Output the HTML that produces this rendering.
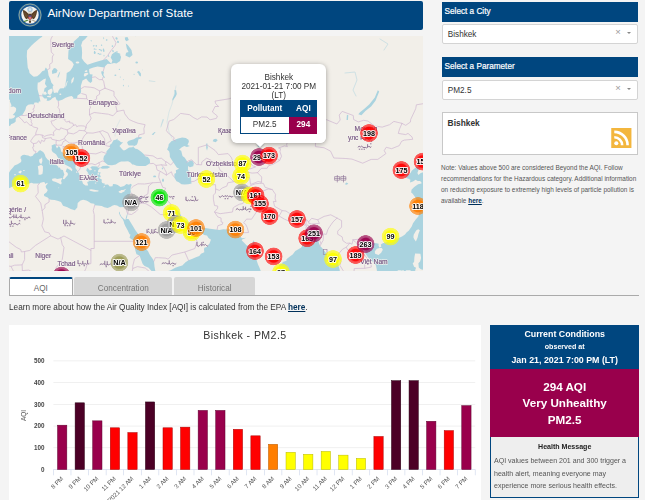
<!DOCTYPE html>
<html><head><meta charset="utf-8">
<style>
html,body{margin:0;padding:0}
body{width:645px;height:500px;overflow:hidden;background:#f4f4f4;font-family:"Liberation Sans",sans-serif;color:#333;position:relative}
.abs{position:absolute}
#hdr{left:9px;top:1px;width:414px;height:29px;background:#00467f;border-radius:2px}
#hdr .t{position:absolute;left:38.4px;top:-3.2px;line-height:29px;font-size:11.7px;color:#fff;white-space:nowrap}
#map{left:9px;top:36px;width:414px;height:235px;background:#f2efe9;overflow:hidden}
.sh{background:#00467f;color:#fff;font-size:8.2px;-webkit-text-stroke:0.2px #fff;line-height:20px;padding-left:3px;white-space:nowrap}
.dd{background:#fff;border:0.6px solid #d4d4d4;border-radius:2px;font-size:8.2px;line-height:20px;color:#333;box-sizing:border-box}
.tab{top:277px;height:18px;box-sizing:border-box;font-size:8.2px;text-align:center;line-height:18px;padding-top:3px;color:#777;background:#d6d6d6;border-radius:2px 2px 0 0}
</style></head><body>

<div id="hdr" class="abs">
<svg class="abs" style="left:8.5px;top:1.6px" width="24" height="24" viewBox="0 0 24 24">
<circle cx="12" cy="12" r="11.8" fill="#23609a"/><circle cx="12" cy="12" r="11" fill="none" stroke="#c9cf9a" stroke-width="0.7" opacity="0.9"/>
<circle cx="12" cy="12" r="9.6" fill="#1b5289"/>
<circle cx="12" cy="12" r="8.7" fill="#f4f3ee"/>
<circle cx="12" cy="6.6" r="2.7" fill="#a8c6dd"/><circle cx="12" cy="6.6" r="1.3" fill="#dbe8f1"/>
<path d="M11.2 12.5 C9.6 9.2 7.4 7.4 4.9 7 C5 10 5.8 13.8 8.2 16.3 C9.8 15.8 10.8 14.4 11.2 12.5Z" fill="#5b4026"/>
<path d="M12.8 12.5 C14.4 9.2 16.6 7.4 19.1 7 C19 10 18.2 13.8 15.8 16.3 C14.2 15.8 13.2 14.4 12.8 12.5Z" fill="#5b4026"/>
<path d="M6.2 9.5 L9.5 13 M6.8 12 L9.2 14.3" stroke="#8a6a45" stroke-width="0.5" fill="none"/><path d="M17.8 9.5 L14.5 13 M17.2 12 L14.8 14.3" stroke="#8a6a45" stroke-width="0.5" fill="none"/>
<ellipse cx="12" cy="13.5" rx="1.9" ry="3.4" fill="#4a3420"/>
<circle cx="12" cy="9.7" r="1.25" fill="#e9e4da" stroke="#9a8a70" stroke-width="0.3"/>
<path d="M10.4 12.4h3.2v2.6q0 1.5 -1.6 2.1q-1.6 -0.6 -1.6 -2.1z" fill="#c93a3c"/><rect x="10.4" y="12.4" width="3.2" height="1.3" fill="#33508f"/>
<path d="M11.45 13.7v3.1M12.55 13.7v3.1" stroke="#f1e9e4" stroke-width="0.35"/>
<path d="M10.7 17.6 L13.3 17.6 L12.6 20 L11.4 20Z" fill="#5b4026"/>
<path d="M9.6 17.2 L6.2 18.6" stroke="#4f8a3c" stroke-width="1.1" stroke-linecap="round"/><path d="M14.4 17.2 L17.8 18.6" stroke="#8c7b5f" stroke-width="0.7" stroke-linecap="round"/>
</svg>
<div class="t">AirNow Department of State</div></div>

<div id="map" class="abs">
<svg id="mapsvg" class="abs" style="left:-9px;top:-36px" width="645" height="500" viewBox="0 0 645 500">
<defs><filter id="soft" x="0" y="0" width="100%" height="100%" filterUnits="userSpaceOnUse"><feGaussianBlur stdDeviation="0.38"/></filter></defs><g filter="url(#soft)"><polygon points="42.2,27.3 42.2,36.7 39.9,38.2 37.2,40.4 34.5,42.7 31.5,45.6 29.5,47.8 27.1,50.6 26.8,56.3 27.1,59.7 27.4,63.8 27.8,67.8 29.1,70.4 29.5,73.0 32.1,75.5 33.8,76.8 37.2,76.2 39.9,73.9 42.5,71.0 44.6,70.4 45.2,68.4 45.9,67.4 46.6,68.4 47.6,69.7 47.9,71.0 48.6,75.5 50.3,79.0 51.3,82.4 53.6,85.2 52.6,86.7 53.0,88.8 53.5,91.5 54.0,93.0 56.6,92.5 58.0,92.7 58.3,90.9 60.0,88.5 62.7,88.2 64.0,88.2 65.4,85.2 65.7,82.4 66.4,78.1 66.7,73.0 70.1,71.0 72.4,67.8 73.8,64.4 72.1,61.7 68.1,59.0 68.4,52.1 69.1,47.0 72.4,43.4 74.1,41.2 79.1,36.7 79.1,27.3 87.5,27.3 87.5,36.3 85.2,38.9 82.5,41.2 81.1,45.6 81.8,47.8 82.1,52.8 81.8,58.3 84.2,61.7 87.5,64.8 94.2,62.4 100.9,60.4 106.6,59.0 110.3,62.8 111.7,64.1 107.7,63.8 105.6,65.8 104.3,67.4 97.6,66.4 93.4,67.4 89.2,69.1 89.2,71.7 89.9,74.3 92.6,74.6 92.0,77.4 92.2,81.2 90.5,83.1 88.2,81.2 86.2,78.4 82.5,80.6 80.8,86.1 81.1,90.9 80.8,93.3 77.5,95.4 77.1,98.3 75.4,98.8 72.8,98.5 73.4,97.4 71.7,96.1 69.1,96.5 65.7,97.7 62.3,99.7 58.3,101.1 56.6,100.0 55.3,96.8 52.3,98.3 50.9,99.7 48.9,100.8 46.6,100.8 47.2,98.5 44.6,98.5 43.9,98.0 42.2,95.9 42.5,93.9 43.9,91.5 44.6,88.2 46.9,86.7 44.9,83.7 45.6,80.6 45.9,78.4 43.6,79.3 39.2,82.4 37.8,82.4 37.5,85.5 37.5,89.1 38.2,92.1 39.2,95.6 39.9,99.1 40.5,101.4 38.9,101.4 38.2,103.4 37.2,102.5 34.5,102.5 33.8,104.5 31.1,104.2 28.1,104.8 26.1,106.8 25.4,109.8 23.8,112.5 22.4,115.0 21.1,115.5 18.4,117.1 16.5,117.7 15.7,119.0 15.7,121.6 14.0,122.9 11.0,124.2 10.7,125.3 8.7,126.3 3.6,126.3 3.6,27.3" fill="#aad3df" />
<polygon points="3.6,107.3 11.7,106.8 13.7,106.6 16.0,108.1 16.2,109.5 15.7,111.4 14.7,112.8 13.4,114.2 12.7,115.0 15.0,115.5 15.0,116.6 13.7,117.9 11.3,118.7 3.6,118.4" fill="#f2efe9" />
<polygon points="3.6,99.1 9.0,99.2 10.1,100.2 9.8,101.4 10.7,103.3 11.2,104.6 11.5,105.9 10.3,107.0 3.6,107.0" fill="#f2efe9" />
<polygon points="43.2,94.5 46.2,94.8 46.6,93.3 45.6,91.5 43.2,92.1" fill="#f2efe9" />
<polygon points="47.6,93.6 49.9,95.1 51.3,93.9 52.6,90.9 52.3,88.5 50.3,89.1 47.9,90.6" fill="#f2efe9" />
<polygon points="47.2,95.9 51.3,95.6 50.6,97.4 47.2,97.1" fill="#f2efe9" />
<polygon points="71.2,83.7 73.1,81.8 74.1,78.1 73.4,77.1 71.4,80.0" fill="#f2efe9" />
<polygon points="65.4,87.9 66.4,85.5 67.7,80.9 67.0,81.2 65.5,85.5" fill="#f2efe9" />
<polygon points="83.7,75.2 84.8,76.8 88.5,73.9 87.5,72.7 84.5,73.3" fill="#f2efe9" />
<polygon points="84.5,71.4 86.2,72.3 87.7,71.0 86.2,69.9" fill="#f2efe9" />
<ellipse cx="60.3" cy="94.2" rx="1.0" ry="0.8" fill="#f2efe9"/>
<ellipse cx="77.5" cy="62.4" rx="1.8" ry="1.0" fill="#f2efe9"/>
<polygon points="51.9,71.0 54.0,68.1 56.0,68.4 57.6,70.4 56.3,73.0 54.6,73.3 52.3,73.9" fill="#aad3df" />
<polygon points="58.0,78.1 59.3,74.9 60.3,71.4 59.0,73.0 57.6,76.8" fill="#aad3df" />
<polygon points="111.3,63.8 114.0,63.1 116.4,63.4 120.1,61.1 121.1,57.0 119.4,53.5 115.4,51.7 112.0,54.2 110.7,57.6 112.4,60.4" fill="#aad3df" />
<polygon points="125.4,55.6 129.5,57.6 132.5,54.9 131.5,49.9 127.8,44.9 125.8,43.4 126.8,48.5 128.5,52.1 126.1,52.8" fill="#aad3df" />
<polygon points="101.6,71.0 104.0,71.7 103.3,74.9 105.0,77.4 104.0,78.1 102.3,75.5 101.3,73.0" fill="#aad3df" />
<polygon points="136.9,72.0 138.9,70.7 140.9,73.6 140.9,76.5 139.2,75.5 138.2,73.3" fill="#aad3df" />
<ellipse cx="136.7" cy="62.6" rx="1.3" ry="1.0" fill="#aad3df"/>
<ellipse cx="115.4" cy="75.2" rx="1.0" ry="0.8" fill="#aad3df"/>
<polygon points="124.8,37.4 127.5,37.0 128.8,40.0 126.4,41.2 125.1,39.7" fill="#aad3df" />
<polygon points="132.2,27.3 132.2,35.1 135.5,36.3 138.5,32.8 138.5,27.3" fill="#aad3df" />
<polygon points="174.4,90.0 176.1,90.3 176.8,93.9 175.8,96.2 173.4,99.7 172.4,100.8 172.4,99.1 174.1,95.6 174.8,93.3" fill="#aad3df" />
<polygon points="162.7,119.0 164.0,119.5 161.3,126.8 160.3,127.8 161.0,124.7" fill="#aad3df" opacity="0.6"/>
<polygon points="151.6,134.6 154.6,131.9 155.6,132.1 153.3,135.1" fill="#aad3df" />
<polygon points="148.9,80.3 155.3,81.2 155.3,82.1 148.9,81.2" fill="#aad3df" opacity="0.5"/>
<polygon points="358.3,114.2 361.4,115.2 365.4,110.9 371.1,106.5 375.5,100.8 379.2,91.5 377.8,90.3 374.8,97.4 369.4,104.2 364.4,108.7 360.0,112.3" fill="#aad3df" />
<polygon points="346.6,120.0 347.9,120.0 348.3,115.2 346.9,114.7" fill="#aad3df" />
<polygon points="320.1,121.6 323.1,120.0 323.4,121.6 321.1,122.7" fill="#aad3df" opacity="0.7"/>
<polygon points="344.9,184.2 346.3,182.5 348.3,183.4 346.9,184.8" fill="#aad3df" />
<polygon points="213.7,139.3 216.1,138.8 217.7,140.3 215.7,142.3 212.7,141.3" fill="#aad3df" />
<polygon points="206.0,143.7 207.3,143.2 208.0,147.5 207.0,150.4 206.0,148.0" fill="#aad3df" opacity="0.8"/>
<polygon points="108.0,165.0 104.3,161.9 103.3,159.1 104.0,155.9 106.3,153.4 106.5,151.3 110.0,147.5 109.7,145.1 111.7,143.5 113.5,140.3 116.0,139.8 117.7,138.4 117.4,140.3 118.7,140.3 121.1,142.3 123.1,142.3 119.4,145.9 122.4,149.4 123.8,150.4 125.4,149.9 129.1,147.5 132.5,147.3 133.2,145.9 133.5,147.1 135.5,148.7 137.2,148.9 139.5,150.6 141.5,152.0 143.6,154.1 145.6,156.4 147.9,157.1 149.8,159.6 150.1,163.0 148.9,164.1 145.6,165.9 143.6,165.9 139.2,166.1 136.5,165.7 133.5,164.6 132.2,164.6 130.8,162.8 128.1,161.2 124.4,161.6 121.1,161.4 118.7,162.5 115.7,164.6 112.0,165.2" fill="#aad3df" />
<polygon points="133.2,145.6 128.8,145.6 127.8,144.2 127.1,142.3 128.8,140.8 133.8,139.3 136.5,137.6 139.9,137.1 142.2,137.4 140.9,138.8 138.5,139.3 137.9,141.8 137.5,143.2 136.5,145.1 134.2,146.1" fill="#aad3df" />
<polygon points="99.9,168.1 102.6,165.9 107.3,165.7 110.3,167.0 107.7,168.5 102.6,168.8" fill="#aad3df" />
<polygon points="168.7,144.2 171.4,141.3 174.8,139.8 178.1,138.4 182.2,137.6 185.8,138.1 188.5,139.8 188.9,141.8 187.5,145.1 189.9,146.1 186.9,147.1 184.2,146.1 181.5,147.5 179.1,149.7 181.2,150.8 182.0,153.9 182.5,155.9 184.8,157.8 187.2,161.4 187.9,162.5 189.5,161.0 192.2,160.5 193.9,163.2 193.2,166.3 189.9,167.2 188.0,165.9 188.0,170.3 189.5,170.7 188.2,173.4 190.9,175.1 191.2,181.5 191.6,183.6 188.2,184.2 184.8,184.6 181.5,184.2 178.8,182.3 176.5,181.3 174.4,177.7 174.4,173.8 176.1,172.9 175.8,170.3 179.1,168.8 176.8,167.4 175.1,165.0 173.1,161.9 169.9,157.1 169.7,153.6 169.1,151.3 167.1,149.4 168.4,146.6" fill="#aad3df" />
<polygon points="3.6,172.5 9.2,172.6 10.3,170.4 13.2,167.2 14.5,165.4 17.6,164.2 21.1,161.9 21.4,160.1 20.5,158.2 20.7,156.4 22.7,155.0 24.4,154.8 26.6,155.2 28.3,155.5 30.2,156.4 32.5,155.9 33.8,154.3 34.7,153.6 37.2,152.7 38.9,150.8 40.3,150.3 43.2,152.0 44.7,154.3 45.6,157.1 47.6,159.6 49.9,161.0 51.4,162.5 52.6,163.9 56.0,164.8 58.2,166.6 58.5,167.7 59.9,167.4 60.7,169.4 62.9,170.1 64.4,174.7 63.5,176.2 62.9,178.9 64.2,179.2 65.9,177.2 67.9,175.1 67.7,172.9 65.7,171.4 67.0,168.3 70.7,170.3 71.9,171.2 72.4,169.6 70.7,167.4 67.4,165.7 64.0,163.9 64.5,161.9 62.0,161.9 59.7,160.5 56.0,154.3 52.6,152.0 51.6,149.9 51.9,147.5 51.6,145.6 54.3,144.2 56.5,144.4 55.6,145.4 57.0,148.5 58.7,146.1 60.3,147.8 61.3,151.8 65.5,154.6 68.9,156.9 71.1,158.5 73.1,159.6 75.3,162.1 75.6,164.6 75.4,168.1 77.5,171.0 79.8,174.7 81.1,177.4 82.0,180.4 83.0,183.8 85.5,185.5 88.2,185.5 87.2,181.9 89.2,181.3 88.2,179.4 89.7,179.2 90.9,180.4 91.0,178.1 92.9,178.3 91.5,176.2 88.5,174.4 87.4,173.4 88.7,173.8 86.2,170.3 87.4,167.7 88.9,169.2 89.9,170.5 92.2,169.6 90.2,167.2 92.2,166.3 97.3,166.6 97.8,167.7 100.3,167.4 98.3,170.1 97.8,172.5 100.6,172.3 99.9,174.7 100.9,177.0 98.6,177.7 100.3,178.7 101.8,179.6 101.6,181.7 102.3,183.0 105.1,183.8 104.3,184.8 108.0,184.6 109.7,186.5 112.5,186.3 113.0,184.0 115.7,184.2 117.7,185.1 120.6,187.1 124.1,186.1 126.4,184.0 129.0,184.8 130.5,183.8 131.8,184.8 130.8,187.3 130.5,189.4 130.8,192.1 129.5,195.9 128.5,198.5 127.8,200.3 127.0,203.3 125.9,205.5 123.8,207.0 120.1,207.3 118.7,206.4 117.1,205.5 114.4,205.1 112.2,205.7 110.7,206.7 107.7,208.1 104.3,207.3 101.8,206.1 97.6,205.5 94.7,205.3 94.2,203.7 90.9,203.3 87.9,201.2 86.3,200.5 83.2,199.8 80.5,200.6 77.7,203.1 77.3,207.5 74.8,210.3 70.7,209.0 67.4,207.3 66.0,206.7 63.0,205.7 61.8,203.5 61.0,202.0 58.3,201.0 54.6,200.0 50.9,199.8 49.1,198.9 47.6,197.6 44.2,195.9 43.9,194.3 46.4,192.5 47.6,190.6 47.4,189.4 46.0,188.1 45.6,185.9 47.6,183.8 47.4,182.8 45.1,184.0 44.9,182.5 43.5,181.9 40.5,182.8 39.7,183.4 36.4,183.6 33.5,183.6 31.3,182.8 27.4,184.2 23.8,183.6 20.6,184.1 17.0,184.8 14.7,185.3 10.7,187.6 8.2,188.6 3.6,190.2" fill="#aad3df" />
<polygon points="18.2,172.1 20.7,170.5 21.9,171.6 20.6,173.5 19.1,172.9" fill="#f2efe9" />
<ellipse cx="23.9" cy="170.4" rx="0.9" ry="0.5" fill="#f2efe9"/>
<ellipse cx="15.0" cy="174.7" rx="0.8" ry="0.6" fill="#f2efe9"/>
<polygon points="39.2,159.6 41.5,158.2 42.0,156.9 42.4,161.0 41.4,164.1 39.9,163.2 39.2,161.4" fill="#f2efe9" />
<polygon points="37.8,166.3 41.2,164.8 42.9,166.3 42.9,170.7 42.4,174.0 40.5,174.7 38.5,174.7 38.5,170.7" fill="#f2efe9" />
<polygon points="52.0,179.8 52.3,178.7 55.1,178.3 57.3,178.9 62.5,177.9 61.0,181.1 61.7,183.0 61.0,184.6 58.0,183.0 55.8,181.9 52.6,180.9" fill="#f2efe9" />
<polygon points="89.4,189.4 91.5,189.2 94.2,189.8 96.9,190.2 98.6,190.6 98.3,191.5 94.2,191.7 90.9,190.9 89.4,190.4" fill="#f2efe9" />
<polygon points="118.7,191.9 118.7,191.3 120.9,190.6 121.1,190.0 123.3,190.0 126.3,188.7 124.3,191.1 124.6,191.6 123.1,192.1 121.1,193.2 119.1,192.6" fill="#f2efe9" />
<polygon points="103.5,186.7 105.0,185.5 104.6,187.1 103.5,187.8" fill="#f2efe9" />
<polygon points="97.1,173.8 98.9,172.9 99.6,174.4 97.9,174.8" fill="#f2efe9" />
<ellipse cx="97.6" cy="177.2" rx="0.7" ry="1.0" fill="#f2efe9"/>
<ellipse cx="95.6" cy="183.0" rx="0.8" ry="0.6" fill="#f2efe9"/>
<ellipse cx="94.9" cy="170.7" rx="0.8" ry="0.5" fill="#f2efe9"/>
<ellipse cx="79.5" cy="178.1" rx="0.7" ry="1.0" fill="#f2efe9"/>
<ellipse cx="76.8" cy="172.1" rx="0.6" ry="0.9" fill="#f2efe9"/>
<ellipse cx="58.7" cy="187.8" rx="0.5" ry="0.4" fill="#f2efe9"/>
<polygon points="119.6,211.6 118.9,212.9 119.9,215.6 121.4,217.7 122.9,219.6 123.9,221.9 124.3,223.8 125.4,226.2 127.5,230.0 129.5,234.2 130.5,234.4 129.5,237.7 133.3,240.6 134.5,244.9 135.2,249.8 135.7,251.7 136.5,254.2 139.5,255.6 142.7,264.0 144.6,266.1 148.6,267.8 152.6,272.3 152.6,276.4 155.6,276.4 155.5,271.9 154.5,266.8 154.0,261.5 153.1,259.4 149.9,254.9 148.2,251.6 145.5,247.9 141.8,243.1 141.2,238.4 138.0,233.7 135.2,230.1 132.7,225.7 130.1,221.5 128.5,218.9 126.4,218.9 127.1,217.1 127.6,213.9 127.8,213.2 127.5,213.3 126.7,215.1 126.1,217.1 125.3,220.1 123.2,218.2 121.4,216.4 120.1,213.9 119.7,211.8" fill="#aad3df" />
<polygon points="173.4,211.6 175.1,210.0 178.5,210.8 181.0,215.4 183.2,219.6 186.9,221.3 189.9,223.8 192.9,224.5 196.9,223.8 199.2,222.2 201.1,222.5 202.0,225.1 202.6,227.5 204.2,227.9 206.7,228.3 210.0,228.8 213.8,229.2 219.5,229.9 223.3,229.3 227.2,229.6 231.8,228.8 233.8,228.8 235.1,231.0 236.9,234.4 239.2,235.3 240.4,236.6 241.9,238.2 246.3,237.8 242.1,239.6 241.8,240.4 243.9,242.6 246.5,245.3 248.5,246.0 251.3,244.7 252.3,244.2 252.6,242.2 253.8,240.2 254.5,242.5 254.1,244.5 254.7,247.0 254.7,252.2 255.3,255.6 256.3,259.2 258.0,264.5 259.1,266.8 260.4,269.9 261.5,273.4 261.5,276.4 164.7,276.4 167.1,271.3 170.1,270.4 172.1,269.5 175.2,267.7 178.8,266.6 182.3,265.4 185.5,262.2 188.5,260.3 191.9,259.1 195.9,257.2 199.3,255.9 201.0,253.8 204.3,252.2 204.0,249.5 204.3,247.8 207.3,246.7 209.5,243.5 211.0,239.4 210.1,239.2 208.3,237.7 207.0,235.5 204.3,235.1 200.8,232.7 199.4,229.9 199.2,228.0 199.8,225.5 199.1,225.8 198.1,227.3 195.8,229.4 192.8,232.3 190.2,233.6 186.9,233.3 183.5,233.3 183.5,231.8 183.5,229.2 182.2,226.0 180.8,228.4 180.8,231.2 178.8,227.7 178.5,224.9 177.0,222.8 172.8,217.0 171.4,213.8 171.4,211.4" fill="#aad3df" />
<polygon points="279.7,276.4 279.7,272.7 279.3,268.0 279.1,265.0 282.2,263.5 282.7,262.0 286.5,260.7 286.4,259.3 289.9,256.6 292.7,254.5 295.3,251.1 298.4,249.2 301.2,247.5 302.3,245.8 302.0,243.8 304.0,242.7 305.8,242.5 309.0,242.7 312.4,241.8 314.4,240.2 315.1,239.5 316.7,239.1 318.4,240.2 319.0,243.3 320.1,246.0 322.1,247.9 324.5,251.0 326.8,254.2 327.3,258.0 326.8,261.9 326.5,262.8 329.1,263.5 331.8,262.6 333.5,260.8 335.5,258.0 335.9,258.4 337.9,261.0 338.4,265.0 339.6,269.4 339.9,271.6 340.6,276.4" fill="#aad3df" />
<polygon points="377.1,276.4 376.8,271.6 376.9,270.3 376.0,265.6 373.6,262.2 371.6,260.7 368.1,257.4 365.2,253.3 365.9,249.4 368.6,245.6 372.6,243.1 376.5,243.3 378.7,243.8 378.5,245.3 379.3,247.6 381.3,246.7 380.8,244.4 382.8,243.3 386.0,242.2 389.6,241.5 391.4,240.7 391.6,238.6 393.6,240.2 395.9,238.7 397.6,238.5 402.0,236.4 405.0,234.4 406.7,232.3 408.7,230.7 411.7,226.6 413.0,223.2 415.9,219.2 418.4,216.4 419.4,211.8 416.1,210.0 419.4,208.1 419.3,205.1 417.1,201.6 416.1,199.6 414.7,196.4 412.7,193.7 411.2,192.5 411.5,189.8 414.2,187.1 418.1,184.2 421.4,183.6 421.6,182.8 420.1,181.1 417.7,180.9 415.6,179.7 413.0,181.5 410.0,182.5 410.4,179.8 408.0,178.5 405.8,177.7 405.5,174.9 406.7,173.8 409.4,174.0 410.7,172.7 411.7,170.7 416.1,167.2 419.4,166.3 420.3,167.4 418.4,170.3 417.4,172.9 418.4,175.1 420.8,173.1 427.5,171.0 429.8,171.0 429.8,276.4" fill="#aad3df" />
<polygon points="375.1,251.0 376.8,248.8 379.5,248.1 381.8,248.1 382.8,249.7 381.2,252.7 378.5,254.9 375.1,253.8 374.8,251.7" fill="#f2efe9" />
<polygon points="416.4,230.3 418.3,229.2 419.8,230.3 418.4,234.0 417.7,237.3 415.9,241.6 414.1,239.1 413.4,237.3 413.7,234.7 415.4,231.8" fill="#f2efe9" />
<polygon points="415.1,253.6 420.4,253.8 421.1,258.0 420.1,261.5 418.4,263.3 418.8,267.5 420.8,269.2 423.8,269.9 423.8,273.0 416.4,273.0 415.1,270.2 416.1,267.8 414.1,266.8 412.7,263.3 414.1,261.9 414.4,257.3" fill="#f2efe9" />
<ellipse cx="419.4" cy="211.0" rx="0.8" ry="0.6" fill="#f2efe9"/>
<ellipse cx="154.6" cy="176.4" rx="1.5" ry="0.9" fill="#aad3df"/>
<ellipse cx="163.0" cy="180.2" rx="0.9" ry="1.8" fill="#aad3df"/>
<ellipse cx="162.4" cy="168.5" rx="0.6" ry="1.1" fill="#aad3df"/>
<ellipse cx="269.4" cy="159.4" rx="3.2" ry="0.9" fill="#aad3df"/>
<polygon points="257.3,146.1 260.4,141.8 265.4,139.1 273.8,139.8 275.8,140.8 268.7,141.0 263.0,143.2 259.3,147.5" fill="#aad3df" />
<g fill="none" stroke="#aad3df" stroke-linecap="round" stroke-linejoin="round" opacity="0.55"><polyline points="345,73 355,72 357,80 353,90 356,96" stroke-width="0.9"/><polyline points="380,39 388,44 384,50" stroke-width="0.9"/><polyline points="176,86 174,96 172,104 169,112 167,122 169,132 172,138" stroke-width="0.6"/><polyline points="120,120 116,128 115,136" stroke-width="0.5"/></g>
<ellipse cx="100.7" cy="54.1" rx="0.7905606838239123" ry="0.5651926580007884" fill="#aad3df"/>
<ellipse cx="93.7" cy="45.8" rx="0.9458224378858614" ry="0.6932283627520955" fill="#aad3df" transform="rotate(-30 93.7 45.8)"/>
<ellipse cx="104.0" cy="55.6" rx="0.45442780800631905" ry="0.8820672702282626" fill="#aad3df"/>
<ellipse cx="94.6" cy="52.7" rx="0.7764599334433535" ry="1.3529380482113051" fill="#aad3df"/>
<ellipse cx="108.6" cy="56.0" rx="0.532649094074589" ry="1.0009984081433831" fill="#aad3df" transform="rotate(-30 108.6 56.0)"/>
<ellipse cx="99.6" cy="54.2" rx="0.47067534284702106" ry="0.7776336416917409" fill="#aad3df"/>
<ellipse cx="96.3" cy="45.8" rx="0.7833480813557104" ry="0.835157788453158" fill="#aad3df"/>
<ellipse cx="112.4" cy="46.1" rx="0.7714057559041323" ry="0.9467730456021426" fill="#aad3df"/>
<ellipse cx="103.8" cy="51.0" rx="0.7513371181045833" ry="0.9078659387336978" fill="#aad3df" transform="rotate(-20 103.8 51.0)"/>
<ellipse cx="98.4" cy="53.6" rx="0.8678977783505462" ry="0.5736695097161928" fill="#aad3df" transform="rotate(-20 98.4 53.6)"/>
<ellipse cx="106.7" cy="40.0" rx="0.8376671736635306" ry="0.7591439884011679" fill="#aad3df" transform="rotate(-30 106.7 40.0)"/>
<ellipse cx="94.4" cy="49.0" rx="0.8542845577391496" ry="0.6367860811944543" fill="#aad3df" transform="rotate(-20 94.4 49.0)"/>
<ellipse cx="103.6" cy="38.2" rx="0.44657228930847737" ry="1.002268177388037" fill="#aad3df" transform="rotate(-20 103.6 38.2)"/>
<ellipse cx="101.1" cy="50.3" rx="0.6980048771793925" ry="1.2172027782394348" fill="#aad3df" transform="rotate(-30 101.1 50.3)"/>
<ellipse cx="116.2" cy="38.5" rx="0.6844590024517867" ry="1.097736984927207" fill="#aad3df" transform="rotate(-30 116.2 38.5)"/>
<ellipse cx="113.0" cy="51.1" rx="0.7467677384306308" ry="1.1131134572605215" fill="#aad3df" transform="rotate(-20 113.0 51.1)"/>
<ellipse cx="99.5" cy="49.6" rx="0.8011916295305129" ry="0.5203066352500297" fill="#aad3df" transform="rotate(-20 99.5 49.6)"/>
<ellipse cx="101.6" cy="45.2" rx="0.6962157967341889" ry="0.6963869973377115" fill="#aad3df" transform="rotate(-20 101.6 45.2)"/>
<ellipse cx="94.8" cy="52.3" rx="0.6345698218799363" ry="1.2842797767136696" fill="#aad3df" transform="rotate(-30 94.8 52.3)"/>
<ellipse cx="95.9" cy="49.3" rx="0.5667034784706704" ry="0.6232335287135232" fill="#aad3df" transform="rotate(-20 95.9 49.3)"/>
<ellipse cx="117.0" cy="51.7" rx="0.6491779103270192" ry="0.8228940487984623" fill="#aad3df" transform="rotate(-20 117.0 51.7)"/>
<ellipse cx="119.8" cy="54.1" rx="0.5057306370942222" ry="0.7087611801375822" fill="#aad3df" transform="rotate(-30 119.8 54.1)"/>
<ellipse cx="91.2" cy="40.8" rx="0.5094057243887185" ry="0.7537376500940638" fill="#aad3df" transform="rotate(-30 91.2 40.8)"/>
<ellipse cx="103.5" cy="49.9" rx="0.7398047342238352" ry="1.3577881329725856" fill="#aad3df"/>
<ellipse cx="116.8" cy="38.4" rx="0.7929798782297972" ry="1.1658062729879735" fill="#aad3df" transform="rotate(-20 116.8 38.4)"/>
<ellipse cx="118.0" cy="41.9" rx="0.9247079104806859" ry="1.2180858090769093" fill="#aad3df" transform="rotate(-20 118.0 41.9)"/>
<ellipse cx="120.3" cy="77.0" rx="0.49260912726607786" ry="0.5002213152581745" fill="#aad3df"/>
<ellipse cx="112.0" cy="57.5" rx="0.47625074732990014" ry="0.3549641525002332" fill="#aad3df"/>
<ellipse cx="128.5" cy="86.0" rx="0.5267134432532338" ry="0.5683093439842177" fill="#aad3df"/>
<ellipse cx="142.5" cy="69.9" rx="0.3281262304613959" ry="0.4039763413893766" fill="#aad3df"/>
<ellipse cx="119.4" cy="69.3" rx="0.6821872095685885" ry="0.6011395944810041" fill="#aad3df"/>
<ellipse cx="123.4" cy="85.6" rx="0.49522722361416427" ry="0.7889115000739301" fill="#aad3df"/>
<ellipse cx="123.6" cy="79.6" rx="0.3576469960873949" ry="0.6748369602212154" fill="#aad3df"/>
<ellipse cx="134.1" cy="74.3" rx="0.5768227075381237" ry="0.5581672594811607" fill="#aad3df"/>
<g fill="none" stroke="#cdb4d0" stroke-width="0.75" stroke-linejoin="round" stroke-linecap="round" opacity="0.9">
<polyline points="47.6,69.7 49.9,68.4 49.6,64.4 52.3,62.4 52.3,57.0 53.6,54.5 51.3,52.1 50.9,45.6 50.9,42.7 50.6,40.4 51.3,38.2 53.0,35.1 55.6,31.3"/>
<polyline points="103.6,60.0 107.7,55.6 111.0,50.6 115.0,45.6 116.0,42.7 112.7,36.7 111.0,31.3"/>
<polyline points="104.3,67.4 103.3,71.0"/>
<polyline points="103.0,77.4 102.3,79.6"/>
<polyline points="92.0,77.4 95.2,76.8 99.3,79.6 102.3,79.6 103.6,81.2 105.0,88.2"/>
<polyline points="81.0,88.7 84.2,86.7 90.9,87.3 94.2,87.9 99.6,90.9 105.0,88.2"/>
<polyline points="99.6,90.9 99.6,94.2 96.6,96.2 96.6,99.1 92.2,101.4 89.2,101.1 86.8,98.8"/>
<polyline points="76.8,98.3 86.8,98.8 86.2,94.8 81.8,93.6"/>
<polyline points="105.0,88.2 114.0,91.5 114.0,95.6 120.1,104.0 115.7,105.4 117.1,111.4"/>
<polyline points="117.1,111.4 113.0,115.8 108.3,114.2 101.6,113.4 94.2,112.5 89.5,114.7"/>
<polyline points="89.5,114.7 89.5,108.7 90.5,108.1 89.2,101.1"/>
<polyline points="58.3,101.4 58.7,105.1 57.8,107.3 59.3,109.0 59.8,111.7 59.7,114.4 60.7,115.8 60.0,118.1"/>
<polyline points="60.0,118.1 61.7,118.4 65.0,119.2 65.0,120.6 66.4,122.1 69.7,121.1 69.4,122.7 72.8,123.2 73.6,125.3"/>
<polyline points="73.6,125.3 75.8,124.7 76.8,126.8 78.1,126.0 80.8,125.8 84.2,126.0 86.0,127.4"/>
<polyline points="86.0,127.4 86.5,124.7 89.9,120.6 91.2,118.2 89.5,114.7"/>
<polyline points="39.2,95.6 42.2,95.9"/>
<polyline points="34.5,105.1 34.0,108.4 32.8,109.0 34.0,110.6 32.8,112.5 30.3,113.1 31.1,115.2 30.5,118.7 31.5,120.8 31.0,121.9 32.1,123.7 31.6,125.5 33.8,127.1 37.8,128.0 35.8,132.9 35.8,134.9 39.2,134.6 42.2,135.1 44.6,136.4 46.9,135.4 51.3,134.6 54.0,135.4 53.3,132.1 56.6,129.1 52.3,124.5 50.9,121.1 53.8,120.6 58.3,117.7 60.0,118.1"/>
<polyline points="18.9,117.0 21.1,118.7 24.4,122.7 26.6,121.9 29.8,125.0 31.6,125.5"/>
<polyline points="21.7,115.5 24.8,115.5 27.1,115.0 30.0,116.6 29.5,118.4 30.5,118.7"/>
<polyline points="35.8,134.9 33.8,136.4 30.8,140.8 30.8,141.8 33.4,143.6 33.8,146.6 32.6,147.1 33.8,150.8 36.0,151.5 35.5,153.2"/>
<polyline points="33.4,143.6 36.7,143.1 38.7,140.6 40.5,143.5 41.5,140.3 44.2,141.5 45.4,138.6 42.5,137.6 42.2,135.1"/>
<polyline points="45.4,138.6 47.9,138.1 51.3,137.6 51.9,139.3 56.3,140.3 56.0,143.2 56.5,144.7"/>
<polyline points="56.3,140.3 59.3,140.8 62.9,139.3 64.4,138.6 65.7,135.9 67.7,134.4 67.9,132.9 67.2,129.9 64.4,129.1 60.7,127.8 59.7,129.9 56.6,129.1"/>
<polyline points="67.2,129.9 70.4,128.1 73.6,125.3"/>
<polyline points="67.9,132.9 73.4,133.9 77.1,132.1 79.1,130.4 82.8,130.6 84.7,130.9 86.0,127.4"/>
<polyline points="84.7,130.9 87.2,132.9 84.2,135.9 81.5,140.8 78.3,142.0 73.8,143.2 69.4,143.0 65.7,140.3 64.4,138.6"/>
<polyline points="56.0,145.4 59.3,145.1 61.7,145.4 63.0,141.8 65.7,140.3"/>
<polyline points="87.2,132.9 92.9,133.1 99.6,131.6 104.6,138.8 105.0,145.4 110.0,146.6"/>
<polyline points="99.6,131.6 102.6,130.6 108.0,133.1 111.3,140.8 107.5,142.7 105.0,145.4"/>
<polyline points="106.3,153.4 101.6,151.8 95.9,153.9 87.5,153.2 86.3,151.3 84.5,149.9 82.1,148.5 82.5,146.8 78.3,142.0"/>
<polyline points="86.3,151.3 85.5,153.2 87.4,156.4 85.5,160.1 87.5,162.5 87.4,164.3 91.9,163.7 95.2,164.8 98.8,162.8 102.3,161.0 104.3,161.5"/>
<polyline points="98.8,162.8 99.6,164.6 97.8,167.0"/>
<polyline points="87.4,164.3 84.2,165.2 80.8,166.6 79.5,169.9 77.5,171.6"/>
<polyline points="80.8,166.6 79.1,164.6 79.5,161.9 77.8,158.7 76.1,158.7 75.3,162.1"/>
<polyline points="63.2,146.6 67.0,146.3 74.1,148.2 75.4,148.0 74.4,150.8 76.1,152.7 74.8,154.6 73.1,155.9 72.2,158.9"/>
<polyline points="63.2,146.6 63.2,148.5 64.7,151.3 67.4,154.6 69.6,156.9 72.2,158.9"/>
<polyline points="74.1,148.2 74.1,145.6 73.8,143.2"/>
<polyline points="74.8,154.6 78.5,157.5 77.8,158.7"/>
<polyline points="78.5,157.5 80.1,155.7 82.8,158.2 82.8,160.3 79.5,161.9"/>
<polyline points="82.8,160.3 85.5,160.1"/>
<polyline points="117.1,111.4 123.8,110.1 124.8,113.9 129.1,119.5 133.2,121.4 137.9,123.2 145.1,124.7 143.9,128.6 144.2,133.6 138.9,134.9 138.5,137.4"/>
<polyline points="144.6,155.0 153.0,155.9 157.3,158.7 161.3,158.2 166.0,161.9 167.2,162.3 170.7,165.0 173.4,162.1"/>
<polyline points="149.8,163.7 153.3,163.4 156.1,165.4 161.3,164.8 166.7,165.4 165.4,163.2 166.0,161.9"/>
<polyline points="156.1,165.4 157.0,169.9 160.7,171.6 166.4,175.1 171.4,171.8 172.4,174.7 174.3,177.1"/>
<polyline points="161.3,164.8 163.4,166.8 164.7,169.4 166.4,172.5 166.4,175.1"/>
<polyline points="160.7,171.6 159.3,172.9 158.7,177.2 160.7,182.3 152.5,182.8 144.6,184.0 137.9,183.8 133.3,186.3 131.6,188.0"/>
<polyline points="152.5,182.8 148.6,186.1 147.9,193.9 140.5,198.2 133.8,202.4 130.1,200.8"/>
<polyline points="125.3,206.7 127.5,213.3"/>
<polyline points="129.8,200.8 129.5,205.5 127.8,213.1"/>
<polyline points="128.1,199.2 129.8,198.6 133.2,194.7 131.1,192.9"/>
<polyline points="127.8,213.9 131.5,214.5 136.2,211.4 137.9,209.4 134.5,205.5 141.9,203.0 140.5,198.2"/>
<polyline points="141.9,203.0 145.9,203.7 151.6,207.1 160.3,214.5 166.6,214.8 169.4,211.4 171.4,211.6"/>
<polyline points="166.6,214.8 169.6,215.2 170.4,217.0 172.8,217.0"/>
<polyline points="160.7,182.3 162.7,187.3 165.7,188.2 163.4,193.1 165.4,198.8 171.1,204.3 170.4,207.5 171.4,209.6 173.3,211.6"/>
<polyline points="191.2,181.7 194.2,181.3 198.9,178.5 202.3,177.9 206.3,180.6 209.3,181.1 212.7,184.8 215.5,184.6 215.7,189.0 215.4,193.1 213.4,195.1 213.4,199.2 214.5,205.5 217.7,206.1 217.6,208.3 214.5,212.0 217.7,216.8 221.1,218.1 221.1,221.9 222.8,222.3 222.4,224.3 217.9,225.7 217.1,229.6"/>
<polyline points="186.5,162.5 188.2,161.0 191.6,159.8 196.4,164.6 198.3,164.6 201.6,164.8 201.8,161.9 206.7,158.2 211.7,160.5 212.0,164.1 218.1,165.4 220.1,170.3 226.5,174.9 233.7,181.7"/>
<polyline points="198.3,164.6 198.3,147.5 207.0,144.9 215.0,150.4 218.4,154.6 228.1,153.6 231.2,157.3 232.2,159.6 231.8,161.4 233.5,161.9 238.5,166.8 240.6,167.7 245.2,161.9 248.4,160.3"/>
<polyline points="215.7,189.0 219.4,190.4 222.1,188.0 226.8,186.1 227.8,182.8 233.7,181.7 237.9,182.3 242.9,182.8 245.9,180.6 246.3,177.2 249.6,177.7 250.6,184.4 254.0,183.2 258.0,181.5 261.7,182.1"/>
<polyline points="260.7,183.2 255.3,183.8 250.6,185.5 249.3,187.1 250.8,190.6 248.9,194.1 245.2,195.5 244.9,199.2 242.9,203.5 239.2,204.3 234.8,206.7 233.2,207.9 232.5,212.0 220.1,213.7 214.5,212.0"/>
<polyline points="237.9,182.3 238.5,178.1 239.2,175.1 236.5,173.4 240.6,172.1 240.9,169.9 246.9,169.0 242.9,170.7 247.3,172.1 252.0,173.1 257.5,172.7"/>
<polyline points="257.5,172.7 261.4,168.3 267.1,168.3 268.4,165.9 273.4,164.1 279.6,160.5 276.1,157.8 265.4,157.3 261.0,155.9 257.0,156.9 256.7,159.4 251.3,157.8 248.4,160.3 245.9,163.7 249.6,163.7 251.0,163.9 252.6,165.9 255.7,166.8 252.0,168.3 248.6,169.2 246.9,169.0"/>
<polyline points="257.5,172.7 261.7,177.0 261.5,182.1"/>
<polyline points="279.6,160.5 281.5,156.2 280.0,151.8 280.5,148.7 278.5,148.0 284.5,145.9 287.4,146.6 286.5,144.9 288.9,136.9 297.3,137.6 297.9,131.1 301.6,127.3 303.5,127.3"/>
<polyline points="175.4,141.0 173.1,139.6 174.4,137.9 168.1,132.9 166.4,130.6 169.1,121.1 173.8,119.5 180.6,113.4 189.5,114.7 193.2,117.4 197.3,119.5 201.6,116.9 207.0,117.1 210.0,119.8 216.4,118.4 217.4,116.0 212.4,112.0 215.0,106.5 218.7,106.5 215.7,103.7 215.0,101.1 229.1,98.8 239.2,95.4 241.9,93.0 247.9,93.3 248.6,100.3 256.7,101.1 258.7,103.1 267.1,100.8 271.8,104.8 279.1,118.4 283.7,118.7 290.2,117.4 293.2,121.4 296.3,124.7 301.0,123.7 303.5,127.3"/>
<polyline points="303.5,127.3 305.0,126.8 311.0,123.2 320.1,118.4 326.8,119.8 336.9,124.0 340.2,120.0 339.2,115.0 342.2,111.4 353.3,115.5 353.6,119.5 358.3,121.9 363.7,120.3 368.1,121.1 374.5,126.0 382.2,127.1 389.6,124.7 393.9,121.4 402.0,123.4"/>
<polyline points="305.0,127.0 305.7,129.9 312.4,133.6 315.7,139.3 315.4,146.6 324.1,147.8 330.5,151.1 333.8,158.0 345.9,158.5 352.0,159.1 362.7,163.2 371.1,159.4 377.8,159.4 385.9,153.6 384.2,150.6 386.2,147.3 391.6,148.7 399.3,145.6 401.6,141.3 404.3,140.1 412.7,139.3 412.0,136.9 408.0,133.4 405.7,134.6 398.3,133.4 399.6,128.8 402.0,123.4"/>
<polyline points="402.0,123.4 405.7,125.3 410.4,122.1 410.7,119.5 415.7,108.7 416.4,104.8 425.1,103.4"/>
<polyline points="353.1,239.8 356.0,239.5 359.0,239.3 363.7,236.6 368.4,238.0 368.1,241.3 372.8,242.9"/>
<polyline points="337.0,218.1 341.6,220.6 341.6,227.1 337.7,231.2 337.7,234.2 342.2,236.9 342.9,240.7 346.6,243.3 349.8,243.1 352.0,244.2 353.1,239.8"/>
<polyline points="346.3,247.2 342.6,249.2 338.5,253.8 338.2,255.9 341.1,261.4 339.9,265.4 343.1,270.6 343.2,274.4"/>
<polyline points="349.8,243.1 346.3,247.2 347.8,250.1 350.1,250.1 349.6,257.3 353.0,255.7 354.7,256.1 357.3,254.2 361.7,257.7 361.9,260.8 364.7,264.7 364.7,268.3"/>
<polyline points="353.1,239.8 355.7,242.4 359.0,245.3 361.4,246.7 359.7,249.7 363.2,253.3 367.9,259.3 370.9,262.4 371.3,267.1 364.7,268.3 354.3,268.5 354.0,271.3"/>
<polyline points="272.1,189.4 275.5,194.3 275.1,198.8 276.1,201.6 273.4,201.4 274.6,206.3 282.2,210.6 285.9,211.0 292.9,215.6 298.9,219.4 306.0,219.6 308.7,221.7 311.7,218.3 317.7,219.8 324.1,216.4 330.8,214.8 337.0,218.1"/>
<polyline points="282.2,210.6 279.1,216.0 284.5,219.2 289.9,221.5 294.2,221.7 298.3,224.3 306.0,225.1 306.0,219.6"/>
<polyline points="308.7,221.7 308.7,223.2 311.7,224.0 319.4,223.4 317.7,219.8"/>
<polyline points="337.0,218.1 333.0,221.9 329.7,226.6 327.8,229.7 326.3,234.5 323.6,233.8 323.1,240.4 321.1,243.8 320.1,246.0"/>
<polyline points="309.2,241.3 308.5,236.9 308.2,233.3 306.0,231.4 306.0,227.3 307.2,224.9 310.2,226.6 311.9,229.2 320.4,230.3 319.1,232.5 316.4,233.6 316.2,235.5 318.1,237.8 320.1,241.3 321.1,243.8"/>
<polyline points="239.2,235.3 241.2,232.9 248.6,232.5 247.3,227.7 245.6,224.3 243.6,222.8 246.6,219.1 251.6,219.2 256.7,211.6 260.7,207.1 260.4,200.6 258.7,198.8 258.7,192.7 268.1,189.0 271.4,189.4"/>
<polyline points="260.7,183.2 263.4,183.4 265.1,187.3 271.4,189.4 272.1,189.4"/>
<polyline points="154.0,261.2 155.3,257.7 158.7,257.7 165.9,258.2 168.1,259.1 172.1,255.0 184.8,252.0 188.5,260.3"/>
<polyline points="184.8,252.0 194.9,248.5 197.1,241.3 195.6,238.7 186.7,237.8 183.5,233.6"/>
<polyline points="195.6,238.7 198.3,234.0 199.4,230.5"/>
<polyline points="94.7,205.3 93.2,210.6 94.2,214.5 94.2,241.3 134.2,241.3"/>
<polyline points="94.2,241.3 94.2,248.5 90.9,248.5 90.9,250.3 64.0,236.0 60.7,237.7 58.0,239.1 50.6,235.8 49.1,232.9 44.7,231.8 41.9,225.8 43.4,219.1 42.2,210.6 44.9,207.9 44.9,204.7 49.1,202.0 49.1,198.9"/>
<polyline points="42.2,210.6 40.7,203.1 35.5,196.4 38.2,192.9 37.8,185.3 39.4,183.4"/>
<polyline points="50.6,235.8 35.5,245.4 29.8,250.4 24.6,251.5 21.4,252.0 20.7,249.5 16.4,247.4 3.6,237.7"/>
<polyline points="24.6,251.5 24.6,259.6 22.1,264.9 14.7,265.2 11.0,266.4 8.0,265.9 3.6,266.8"/>
<polyline points="60.7,237.7 62.3,244.9 64.0,247.2 62.3,259.4 56.0,267.8 55.6,270.9 55.3,274.7"/>
<polyline points="90.9,250.3 90.9,263.6 87.2,264.3 85.8,268.8 84.5,271.3 85.2,274.4"/>
<polyline points="11.0,266.4 13.7,271.6 18.4,275.4"/>
<polyline points="22.1,264.9 22.4,270.6 22.4,274.7"/>
<polyline points="22.4,270.6 28.8,270.1 33.8,272.6 40.5,273.5"/>
<polyline points="139.5,255.6 134.5,259.1 132.7,266.1 132.8,268.5 137.5,266.6 141.2,267.3 145.2,268.0 148.6,270.9 152.6,274.7"/>
<polyline points="132.8,268.5 131.5,274.0"/>
</g>
<g font-family="Liberation Sans, sans-serif" font-size="6.7" fill="#775885" stroke-linejoin="round">
<text x="63" y="47" text-anchor="middle" stroke="#f7f4ef" stroke-width="1.5" stroke-opacity="0.85" fill="none">Sverige</text>
<text x="63" y="47" text-anchor="middle" stroke="#775885" stroke-width="0.18">Sverige</text>
<text x="21" y="93" text-anchor="end" stroke="#f7f4ef" stroke-width="1.5" stroke-opacity="0.85" fill="none">United Kingdom</text>
<text x="21" y="93" text-anchor="end" stroke="#775885" stroke-width="0.18">United Kingdom</text>
<text x="46" y="118" text-anchor="middle" stroke="#f7f4ef" stroke-width="1.5" stroke-opacity="0.85" fill="none">Deutschland</text>
<text x="46" y="118" text-anchor="middle" stroke="#775885" stroke-width="0.18">Deutschland</text>
<text x="103" y="105" text-anchor="middle" stroke="#f7f4ef" stroke-width="1.5" stroke-opacity="0.85" fill="none">Беларусь</text>
<text x="103" y="105" text-anchor="middle" stroke="#775885" stroke-width="0.18">Беларусь</text>
<text x="27" y="140" text-anchor="end" stroke="#f7f4ef" stroke-width="1.5" stroke-opacity="0.85" fill="none">France</text>
<text x="27" y="140" text-anchor="end" stroke="#775885" stroke-width="0.18">France</text>
<text x="124" y="133" text-anchor="middle" stroke="#f7f4ef" stroke-width="1.5" stroke-opacity="0.85" fill="none">Україна</text>
<text x="124" y="133" text-anchor="middle" stroke="#775885" stroke-width="0.18">Україна</text>
<text x="91.5" y="145" text-anchor="middle" stroke="#f7f4ef" stroke-width="1.5" stroke-opacity="0.85" fill="none">România</text>
<text x="91.5" y="145" text-anchor="middle" stroke="#775885" stroke-width="0.18">România</text>
<text x="56.7" y="164" text-anchor="middle" stroke="#f7f4ef" stroke-width="1.5" stroke-opacity="0.85" fill="none">Italia</text>
<text x="56.7" y="164" text-anchor="middle" stroke="#775885" stroke-width="0.18">Italia</text>
<text x="88.3" y="180" text-anchor="middle" stroke="#f7f4ef" stroke-width="1.5" stroke-opacity="0.85" fill="none">Ελλάς</text>
<text x="88.3" y="180" text-anchor="middle" stroke="#775885" stroke-width="0.18">Ελλάς</text>
<text x="130" y="176.4" text-anchor="middle" stroke="#f7f4ef" stroke-width="1.5" stroke-opacity="0.85" fill="none">Türkiye</text>
<text x="130" y="176.4" text-anchor="middle" stroke="#775885" stroke-width="0.18">Türkiye</text>
<text x="218" y="132.6" text-anchor="start" stroke="#f7f4ef" stroke-width="1.5" stroke-opacity="0.85" fill="none">Қазақстан</text>
<text x="218" y="132.6" text-anchor="start" stroke="#775885" stroke-width="0.18">Қазақстан</text>
<text x="206" y="166" text-anchor="start" stroke="#f7f4ef" stroke-width="1.5" stroke-opacity="0.85" fill="none">O'zbekiston</text>
<text x="206" y="166" text-anchor="start" stroke="#775885" stroke-width="0.18">O'zbekiston</text>
<text x="207" y="176.6" text-anchor="middle" stroke="#f7f4ef" stroke-width="1.5" stroke-opacity="0.85" fill="none">Türkmenistan</text>
<text x="207" y="176.6" text-anchor="middle" stroke="#775885" stroke-width="0.18">Türkmenistan</text>
<text x="43.3" y="258.4" text-anchor="middle" stroke="#f7f4ef" stroke-width="1.5" stroke-opacity="0.85" fill="none">Niger</text>
<text x="43.3" y="258.4" text-anchor="middle" stroke="#775885" stroke-width="0.18">Niger</text>
<text x="13.6" y="258.4" text-anchor="end" stroke="#f7f4ef" stroke-width="1.5" stroke-opacity="0.85" fill="none">Mali</text>
<text x="13.6" y="258.4" text-anchor="end" stroke="#775885" stroke-width="0.18">Mali</text>
<text x="57.6" y="265.6" text-anchor="start" stroke="#f7f4ef" stroke-width="1.5" stroke-opacity="0.85" fill="none">Tchad</text>
<text x="57.6" y="265.6" text-anchor="start" stroke="#775885" stroke-width="0.18">Tchad</text>
<text x="26" y="211.6" text-anchor="end" stroke="#f7f4ef" stroke-width="1.5" stroke-opacity="0.85" fill="none">Algérie /</text>
<text x="26" y="211.6" text-anchor="end" stroke="#775885" stroke-width="0.18">Algérie /</text>
<text x="374" y="264.4" text-anchor="middle" stroke="#f7f4ef" stroke-width="1.5" stroke-opacity="0.85" fill="none">Việt Nam</text>
<text x="374" y="264.4" text-anchor="middle" stroke="#775885" stroke-width="0.18">Việt Nam</text>
<text x="414" y="275.8" text-anchor="middle" stroke="#f7f4ef" stroke-width="1.5" stroke-opacity="0.85" fill="none">Philippines</text>
<text x="414" y="275.8" text-anchor="middle" stroke="#775885" stroke-width="0.18">Philippines</text>
<text x="366" y="130.6" text-anchor="middle" stroke="#f7f4ef" stroke-width="1.5" stroke-opacity="0.85" fill="none">Монгол</text>
<text x="366" y="130.6" text-anchor="middle" stroke="#775885" stroke-width="0.18">Монгол</text>
<text x="348" y="139.6" text-anchor="start" stroke="#f7f4ef" stroke-width="1.5" stroke-opacity="0.85" fill="none">улс</text>
<text x="348" y="139.6" text-anchor="start" stroke="#775885" stroke-width="0.18">улс</text>
</g>
<g fill="none" stroke="#775885" stroke-width="0.95" stroke-linecap="round" opacity="0.85">
<path d="M186.0 200.0 L186.0 197.1 M186.0 200.0 Q187.2 202.0 188.4 200.0 Q189.6 201.3 190.8 199.8 Q192.0 201.4 193.2 200.2 Q194.4 201.8 195.6 200.1 L195.6 197.8 M195.6 200.0 Q196.8 201.5 198.0 200.1 M192.0 196.8h0.6 M194.4 196.8h0.6"/>
<path d="M169.0 196.5 Q170.2 197.9 171.4 196.7 Q172.6 197.6 173.8 196.3 Q173.9 197.9 174.0 196.7 M172.6 198.7h0.6"/>
<path d="M135.0 197.0 Q136.2 198.6 137.4 197.2 Q138.6 199.1 139.8 197.1 Q141.0 195.2 142.2 196.8 Q143.4 198.1 144.6 197.0 Q145.8 198.9 147.0 196.9 Q147.5 198.9 148.0 196.7 M138.6 199.2h0.6 M145.8 199.2h0.6"/>
<path d="M140.0 201.5 L140.0 198.4 M140.0 201.5 Q141.2 203.1 142.4 201.8 Q143.6 202.5 144.8 201.3 Q146.0 202.8 147.2 201.4 Q147.6 202.8 148.0 201.8 M141.2 198.3h0.6"/>
<path d="M219.0 196.5 Q220.2 198.4 221.4 196.4 Q222.6 194.8 223.8 196.8 Q225.0 194.5 226.2 196.5 Q227.4 194.7 228.6 196.8 Q229.8 195.5 231.0 196.6 Q232.0 198.1 233.0 196.4 M225.0 198.7h0.6 M227.4 198.7h0.6"/>
<path d="M236.0 209.5 Q237.2 207.5 238.4 209.4 Q239.6 210.7 240.8 209.3 Q242.0 210.8 243.2 209.4 L243.2 206.6 M243.2 209.5 Q244.4 208.2 245.6 209.3 L245.6 207.1 M245.6 209.5 Q246.8 211.2 248.0 209.3 Q249.2 208.0 250.4 209.7 Q250.7 207.5 251.0 209.5 M249.2 211.7h0.6 M250.7 206.3h0.6"/>
<path d="M63.6 223.5 L63.6 220.2 M63.6 223.5 Q64.8 225.4 66.0 223.7 L66.0 220.3 M66.0 223.5 Q67.2 221.6 68.4 223.4 Q69.6 225.0 70.8 223.6 L70.8 220.8 M70.8 223.5 Q72.0 222.5 73.2 223.8 Q74.1 225.1 75.0 223.8 M64.8 225.7h0.6 M67.2 225.7h0.6 M69.6 225.7h0.6"/>
<path d="M104.0 222.5 L104.0 219.8 M104.0 222.5 Q105.2 224.1 106.4 222.7 Q107.6 223.6 108.8 222.3 Q110.0 224.1 111.2 222.2 L111.2 219.9 M111.2 222.5 Q112.4 221.0 113.6 222.4 Q114.6 223.6 115.6 222.8 M107.6 219.3h0.6"/>
<path d="M100.0 264.5 Q101.2 263.1 102.4 264.3 Q103.6 263.3 104.8 264.4 L104.8 261.2 M104.8 264.5 Q106.0 266.2 107.2 264.7 L107.2 261.6 M107.2 264.5 Q108.4 265.5 109.6 264.4 Q110.3 263.5 111.0 264.2 M106.0 266.7h0.6"/>
<path d="M78.0 263.5 L78.0 260.4 M78.0 263.5 Q79.2 264.8 80.4 263.4 Q81.6 264.8 82.8 263.8 L82.8 261.3 M82.8 263.5 Q84.0 265.4 85.2 263.5 Q86.4 265.2 87.6 263.2 L87.6 260.5 M87.6 263.5 Q88.3 264.9 89.0 263.6 M79.2 265.7h0.6 M84.0 265.7h0.6"/>
<path d="M147.0 232.5 L147.0 229.7 M147.0 232.5 Q148.2 230.6 149.4 232.3 Q150.6 234.5 151.8 232.5 L151.8 229.5 M151.8 232.5 Q153.0 234.2 154.2 232.6 L154.2 229.6 M154.2 232.5 Q155.4 231.0 156.6 232.3 Q157.3 233.7 158.0 232.2 M148.2 229.3h0.6 M155.4 229.3h0.6"/>
<path d="M197.0 245.5 L197.0 242.3 M197.0 245.5 Q198.2 247.4 199.4 245.8 Q200.6 243.4 201.8 245.5 L201.8 242.6 M201.8 245.5 Q203.0 243.5 204.2 245.2 Q205.4 243.4 206.6 245.6 Q207.3 246.7 208.0 245.6 M203.0 242.3h0.6"/>
<path d="M162.0 263.5 Q163.2 262.1 164.4 263.3 Q165.6 262.1 166.8 263.5 Q168.0 264.6 169.2 263.4 L169.2 260.7 M169.2 263.5 Q170.4 265.5 171.6 263.5 Q172.8 262.4 174.0 263.7 Q175.0 265.2 176.0 263.7 M172.8 265.7h0.6"/>
<path d="M9.0 224.0 Q10.2 226.0 11.4 223.9 L11.4 221.1 M11.4 224.0 Q12.6 222.7 13.8 224.2 Q15.0 222.5 16.2 224.2 Q17.4 226.1 18.6 223.7 Q19.3 222.5 20.0 223.8 M10.2 226.2h0.6 M12.6 226.2h0.6 M19.3 220.8h0.6"/>
<path d="M9.0 217.5 Q10.2 218.7 11.4 217.3 Q12.6 215.5 13.8 217.4 L13.8 214.8 M13.8 217.5 Q15.0 216.4 16.2 217.4 L16.2 214.8 M16.2 217.5 Q17.4 218.5 18.6 217.4 Q19.8 215.8 21.0 217.6 L21.0 214.9 M21.0 217.5 Q22.2 218.5 23.4 217.5 Q24.6 218.6 25.8 217.8 Q27.0 219.2 28.2 217.6 Q29.1 215.7 30.0 217.8 M10.2 214.3h0.6 M24.6 219.7h0.6"/>
<path d="M358.0 147.0 Q359.2 145.3 360.4 147.0 Q361.6 145.3 362.8 147.1 Q364.0 148.1 365.2 147.3 Q366.4 148.6 367.6 147.1 L367.6 144.6 M367.6 147.0 Q368.8 145.9 370.0 146.8 Q370.5 148.4 371.0 146.9 M359.2 149.2h0.6 M361.6 149.2h0.6 M364.0 149.2h0.6 M370.5 143.8h0.6"/>
<path d="M361.0 139.0 L361.0 136.2 M361.0 139.0 Q362.2 137.3 363.4 139.0 Q364.6 140.6 365.8 139.2 L365.8 136.1 M365.8 139.0 Q367.0 137.4 368.2 139.2 Q369.4 140.9 370.6 139.1 L370.6 136.3 M370.6 139.0 Q371.3 137.4 372.0 138.8 M364.6 135.8h0.6 M367.0 135.8h0.6 M371.3 141.2h0.6"/>
<path d="M335 176.6h4.6v3.6h-4.6z M337.3 175.4v6.6 M335 178.4h4.6" stroke-width="0.6"/>
<path d="M341.2 176.6h4.6v3.6h-4.6z M343.5 175.4v6.6 M341.2 178.4h4.6" stroke-width="0.6"/>
</g><rect x="323.2" y="249.3" width="3.8" height="5" fill="none" stroke="#8a6d94" stroke-width="0.5"/></g>
<g filter="url(#soft)"><defs>
<radialGradient id="gy"><stop offset="0" stop-color="#ffff00" stop-opacity="0.96"/><stop offset="0.62" stop-color="#ffff00" stop-opacity="0.96"/><stop offset="0.74" stop-color="#ffff00" stop-opacity="0.68"/><stop offset="0.93" stop-color="#ffff00" stop-opacity="0.6"/><stop offset="1" stop-color="#ffff00" stop-opacity="0"/></radialGradient>
<radialGradient id="go"><stop offset="0" stop-color="#ff7e00" stop-opacity="0.96"/><stop offset="0.62" stop-color="#ff7e00" stop-opacity="0.96"/><stop offset="0.74" stop-color="#ff7e00" stop-opacity="0.68"/><stop offset="0.93" stop-color="#ff7e00" stop-opacity="0.6"/><stop offset="1" stop-color="#ff7e00" stop-opacity="0"/></radialGradient>
<radialGradient id="gr"><stop offset="0" stop-color="#ff0000" stop-opacity="0.96"/><stop offset="0.62" stop-color="#ff0000" stop-opacity="0.96"/><stop offset="0.74" stop-color="#ff0000" stop-opacity="0.68"/><stop offset="0.93" stop-color="#ff0000" stop-opacity="0.6"/><stop offset="1" stop-color="#ff0000" stop-opacity="0"/></radialGradient>
<radialGradient id="gg"><stop offset="0" stop-color="#00e400" stop-opacity="0.96"/><stop offset="0.62" stop-color="#00e400" stop-opacity="0.96"/><stop offset="0.74" stop-color="#00e400" stop-opacity="0.68"/><stop offset="0.93" stop-color="#00e400" stop-opacity="0.6"/><stop offset="1" stop-color="#00e400" stop-opacity="0"/></radialGradient>
<radialGradient id="gp"><stop offset="0" stop-color="#99004c" stop-opacity="0.96"/><stop offset="0.62" stop-color="#99004c" stop-opacity="0.96"/><stop offset="0.74" stop-color="#99004c" stop-opacity="0.68"/><stop offset="0.93" stop-color="#99004c" stop-opacity="0.6"/><stop offset="1" stop-color="#99004c" stop-opacity="0"/></radialGradient>
<radialGradient id="gn"><stop offset="0" stop-color="#9c9c9c" stop-opacity="0.96"/><stop offset="0.62" stop-color="#9c9c9c" stop-opacity="0.96"/><stop offset="0.74" stop-color="#9c9c9c" stop-opacity="0.68"/><stop offset="0.93" stop-color="#9c9c9c" stop-opacity="0.6"/><stop offset="1" stop-color="#9c9c9c" stop-opacity="0"/></radialGradient>
<radialGradient id="gk"><stop offset="0" stop-color="#9a9a52" stop-opacity="0.96"/><stop offset="0.62" stop-color="#9a9a52" stop-opacity="0.96"/><stop offset="0.74" stop-color="#9a9a52" stop-opacity="0.68"/><stop offset="0.93" stop-color="#9a9a52" stop-opacity="0.6"/><stop offset="1" stop-color="#9a9a52" stop-opacity="0"/></radialGradient>
<radialGradient id="gm"><stop offset="0" stop-color="#8f3f97" stop-opacity="0.96"/><stop offset="0.62" stop-color="#8f3f97" stop-opacity="0.96"/><stop offset="0.74" stop-color="#8f3f97" stop-opacity="0.68"/><stop offset="0.93" stop-color="#8f3f97" stop-opacity="0.6"/><stop offset="1" stop-color="#8f3f97" stop-opacity="0"/></radialGradient>
</defs>
<circle cx="61.5" cy="275.6" r="9.2" fill="url(#gp)"/>
<circle cx="20.6" cy="183.6" r="9.2" fill="url(#gy)"/>
<text x="20.6" y="186.1" text-anchor="middle" font-size="7.2" font-weight="700" fill="#000" stroke="#fff" stroke-width="2" stroke-opacity="0.9" stroke-linejoin="round" paint-order="stroke" font-family="Liberation Sans, sans-serif">61</text>
<circle cx="71.4" cy="152.4" r="9.2" fill="url(#go)"/>
<circle cx="81.4" cy="158" r="9.2" fill="url(#gr)"/>
<text x="71.4" y="154.9" text-anchor="middle" font-size="7.2" font-weight="700" fill="#000" stroke="#fff" stroke-width="2" stroke-opacity="0.9" stroke-linejoin="round" paint-order="stroke" font-family="Liberation Sans, sans-serif">105</text>
<text x="81.4" y="160.5" text-anchor="middle" font-size="7.2" font-weight="700" fill="#000" stroke="#fff" stroke-width="2" stroke-opacity="0.9" stroke-linejoin="round" paint-order="stroke" font-family="Liberation Sans, sans-serif">152</text>
<circle cx="131" cy="202.4" r="9.2" fill="url(#gn)"/>
<text x="131" y="204.9" text-anchor="middle" font-size="7.2" font-weight="700" fill="#000" stroke="#fff" stroke-width="2" stroke-opacity="0.9" stroke-linejoin="round" paint-order="stroke" font-family="Liberation Sans, sans-serif">N/A</text>
<circle cx="159.4" cy="197.6" r="9.2" fill="url(#gg)"/>
<text x="159.4" y="200.1" text-anchor="middle" font-size="7.2" font-weight="700" fill="#000" stroke="#fff" stroke-width="2" stroke-opacity="0.9" stroke-linejoin="round" paint-order="stroke" font-family="Liberation Sans, sans-serif">46</text>
<circle cx="171.6" cy="213" r="9.2" fill="url(#gy)"/>
<text x="171.6" y="215.5" text-anchor="middle" font-size="7.2" font-weight="700" fill="#000" stroke="#fff" stroke-width="2" stroke-opacity="0.9" stroke-linejoin="round" paint-order="stroke" font-family="Liberation Sans, sans-serif">71</text>
<circle cx="166.6" cy="230" r="9.2" fill="url(#gn)"/>
<text x="166.6" y="232.5" text-anchor="middle" font-size="7.2" font-weight="700" fill="#000" stroke="#fff" stroke-width="2" stroke-opacity="0.9" stroke-linejoin="round" paint-order="stroke" font-family="Liberation Sans, sans-serif">N/A</text>
<circle cx="175.5" cy="224" r="9.2" fill="url(#gn)"/>
<text x="175.5" y="226.5" text-anchor="middle" font-size="7.2" font-weight="700" fill="#000" stroke="#fff" stroke-width="2" stroke-opacity="0.9" stroke-linejoin="round" paint-order="stroke" font-family="Liberation Sans, sans-serif">N/A</text>
<circle cx="180.5" cy="225" r="9.2" fill="url(#gy)"/>
<text x="180.5" y="227.5" text-anchor="middle" font-size="7.2" font-weight="700" fill="#000" stroke="#fff" stroke-width="2" stroke-opacity="0.9" stroke-linejoin="round" paint-order="stroke" font-family="Liberation Sans, sans-serif">73</text>
<circle cx="191.6" cy="232.4" r="9.2" fill="url(#gy)"/>
<text x="191.6" y="234.9" text-anchor="middle" font-size="7.2" font-weight="700" fill="#000" stroke="#fff" stroke-width="2" stroke-opacity="0.9" stroke-linejoin="round" paint-order="stroke" font-family="Liberation Sans, sans-serif">50</text>
<circle cx="196" cy="228" r="9.2" fill="url(#go)"/>
<text x="196" y="230.5" text-anchor="middle" font-size="7.2" font-weight="700" fill="#000" stroke="#fff" stroke-width="2" stroke-opacity="0.9" stroke-linejoin="round" paint-order="stroke" font-family="Liberation Sans, sans-serif">101</text>
<circle cx="141.6" cy="242" r="9.2" fill="url(#go)"/>
<text x="141.6" y="244.5" text-anchor="middle" font-size="7.2" font-weight="700" fill="#000" stroke="#fff" stroke-width="2" stroke-opacity="0.9" stroke-linejoin="round" paint-order="stroke" font-family="Liberation Sans, sans-serif">121</text>
<circle cx="119.4" cy="262.6" r="9.2" fill="url(#gk)"/>
<text x="119.4" y="265.1" text-anchor="middle" font-size="7.2" font-weight="700" fill="#000" stroke="#fff" stroke-width="2" stroke-opacity="0.9" stroke-linejoin="round" paint-order="stroke" font-family="Liberation Sans, sans-serif">N/A</text>
<circle cx="206.4" cy="179" r="9.2" fill="url(#gy)"/>
<text x="206.4" y="181.5" text-anchor="middle" font-size="7.2" font-weight="700" fill="#000" stroke="#fff" stroke-width="2" stroke-opacity="0.9" stroke-linejoin="round" paint-order="stroke" font-family="Liberation Sans, sans-serif">52</text>
<circle cx="242.6" cy="163.6" r="9.2" fill="url(#gy)"/>
<text x="242.6" y="166.1" text-anchor="middle" font-size="7.2" font-weight="700" fill="#000" stroke="#fff" stroke-width="2" stroke-opacity="0.9" stroke-linejoin="round" paint-order="stroke" font-family="Liberation Sans, sans-serif">87</text>
<circle cx="241" cy="176" r="9.2" fill="url(#gy)"/>
<text x="241" y="178.5" text-anchor="middle" font-size="7.2" font-weight="700" fill="#000" stroke="#fff" stroke-width="2" stroke-opacity="0.9" stroke-linejoin="round" paint-order="stroke" font-family="Liberation Sans, sans-serif">74</text>
<circle cx="242" cy="192.4" r="9.2" fill="url(#gn)"/>
<text x="242" y="194.9" text-anchor="middle" font-size="7.2" font-weight="700" fill="#000" stroke="#fff" stroke-width="2" stroke-opacity="0.9" stroke-linejoin="round" paint-order="stroke" font-family="Liberation Sans, sans-serif">N/A</text>
<circle cx="249.6" cy="195.5" r="9.2" fill="url(#gy)"/>
<text x="249.6" y="198.0" text-anchor="middle" font-size="7.2" font-weight="700" fill="#000" stroke="#fff" stroke-width="2" stroke-opacity="0.9" stroke-linejoin="round" paint-order="stroke" font-family="Liberation Sans, sans-serif">1</text>
<circle cx="255.6" cy="195.4" r="9.2" fill="url(#gr)"/>
<text x="255.6" y="197.9" text-anchor="middle" font-size="7.2" font-weight="700" fill="#000" stroke="#fff" stroke-width="2" stroke-opacity="0.9" stroke-linejoin="round" paint-order="stroke" font-family="Liberation Sans, sans-serif">161</text>
<circle cx="260" cy="203.8" r="9.2" fill="url(#gr)"/>
<text x="260" y="206.3" text-anchor="middle" font-size="7.2" font-weight="700" fill="#000" stroke="#fff" stroke-width="2" stroke-opacity="0.9" stroke-linejoin="round" paint-order="stroke" font-family="Liberation Sans, sans-serif">155</text>
<circle cx="269.6" cy="216" r="9.2" fill="url(#gr)"/>
<text x="269.6" y="218.5" text-anchor="middle" font-size="7.2" font-weight="700" fill="#000" stroke="#fff" stroke-width="2" stroke-opacity="0.9" stroke-linejoin="round" paint-order="stroke" font-family="Liberation Sans, sans-serif">170</text>
<circle cx="259" cy="157" r="9.2" fill="url(#gp)"/>
<text x="259" y="159.5" text-anchor="middle" font-size="7.2" font-weight="700" fill="#000" stroke="#fff" stroke-width="2" stroke-opacity="0.9" stroke-linejoin="round" paint-order="stroke" font-family="Liberation Sans, sans-serif">294</text>
<circle cx="269" cy="155.6" r="9.2" fill="url(#gr)"/>
<text x="269" y="158.1" text-anchor="middle" font-size="7.2" font-weight="700" fill="#000" stroke="#fff" stroke-width="2" stroke-opacity="0.9" stroke-linejoin="round" paint-order="stroke" font-family="Liberation Sans, sans-serif">173</text>
<circle cx="297" cy="219" r="9.2" fill="url(#gr)"/>
<text x="297" y="221.5" text-anchor="middle" font-size="7.2" font-weight="700" fill="#000" stroke="#fff" stroke-width="2" stroke-opacity="0.9" stroke-linejoin="round" paint-order="stroke" font-family="Liberation Sans, sans-serif">157</text>
<circle cx="235.4" cy="229.6" r="9.2" fill="url(#go)"/>
<text x="235.4" y="232.1" text-anchor="middle" font-size="7.2" font-weight="700" fill="#000" stroke="#fff" stroke-width="2" stroke-opacity="0.9" stroke-linejoin="round" paint-order="stroke" font-family="Liberation Sans, sans-serif">108</text>
<circle cx="307.2" cy="238.2" r="9.2" fill="url(#gr)"/>
<text x="307.2" y="240.7" text-anchor="middle" font-size="7.2" font-weight="700" fill="#000" stroke="#fff" stroke-width="2" stroke-opacity="0.9" stroke-linejoin="round" paint-order="stroke" font-family="Liberation Sans, sans-serif">163</text>
<circle cx="314" cy="233.3" r="9.2" fill="url(#gp)"/>
<text x="314" y="235.8" text-anchor="middle" font-size="7.2" font-weight="700" fill="#000" stroke="#fff" stroke-width="2" stroke-opacity="0.9" stroke-linejoin="round" paint-order="stroke" font-family="Liberation Sans, sans-serif">251</text>
<circle cx="255" cy="251" r="9.2" fill="url(#gr)"/>
<text x="255" y="253.5" text-anchor="middle" font-size="7.2" font-weight="700" fill="#000" stroke="#fff" stroke-width="2" stroke-opacity="0.9" stroke-linejoin="round" paint-order="stroke" font-family="Liberation Sans, sans-serif">164</text>
<circle cx="273.6" cy="256.4" r="9.2" fill="url(#gr)"/>
<text x="273.6" y="258.9" text-anchor="middle" font-size="7.2" font-weight="700" fill="#000" stroke="#fff" stroke-width="2" stroke-opacity="0.9" stroke-linejoin="round" paint-order="stroke" font-family="Liberation Sans, sans-serif">153</text>
<circle cx="281" cy="272.3" r="9.2" fill="url(#gy)"/>
<text x="281" y="274.8" text-anchor="middle" font-size="7.2" font-weight="700" fill="#000" stroke="#fff" stroke-width="2" stroke-opacity="0.9" stroke-linejoin="round" paint-order="stroke" font-family="Liberation Sans, sans-serif">97</text>
<circle cx="333" cy="259" r="9.2" fill="url(#gy)"/>
<text x="333" y="261.5" text-anchor="middle" font-size="7.2" font-weight="700" fill="#000" stroke="#fff" stroke-width="2" stroke-opacity="0.9" stroke-linejoin="round" paint-order="stroke" font-family="Liberation Sans, sans-serif">97</text>
<circle cx="355.6" cy="255" r="9.2" fill="url(#gr)"/>
<text x="355.6" y="257.5" text-anchor="middle" font-size="7.2" font-weight="700" fill="#000" stroke="#fff" stroke-width="2" stroke-opacity="0.9" stroke-linejoin="round" paint-order="stroke" font-family="Liberation Sans, sans-serif">189</text>
<circle cx="365.6" cy="244" r="9.2" fill="url(#gp)"/>
<text x="365.6" y="246.5" text-anchor="middle" font-size="7.2" font-weight="700" fill="#000" stroke="#fff" stroke-width="2" stroke-opacity="0.9" stroke-linejoin="round" paint-order="stroke" font-family="Liberation Sans, sans-serif">263</text>
<circle cx="390.6" cy="236.6" r="9.2" fill="url(#gy)"/>
<text x="390.6" y="239.1" text-anchor="middle" font-size="7.2" font-weight="700" fill="#000" stroke="#fff" stroke-width="2" stroke-opacity="0.9" stroke-linejoin="round" paint-order="stroke" font-family="Liberation Sans, sans-serif">99</text>
<circle cx="418" cy="206" r="9.2" fill="url(#go)"/>
<text x="418" y="208.5" text-anchor="middle" font-size="7.2" font-weight="700" fill="#000" stroke="#fff" stroke-width="2" stroke-opacity="0.9" stroke-linejoin="round" paint-order="stroke" font-family="Liberation Sans, sans-serif">118</text>
<circle cx="401.4" cy="170" r="9.2" fill="url(#gr)"/>
<text x="401.4" y="172.5" text-anchor="middle" font-size="7.2" font-weight="700" fill="#000" stroke="#fff" stroke-width="2" stroke-opacity="0.9" stroke-linejoin="round" paint-order="stroke" font-family="Liberation Sans, sans-serif">175</text>
<circle cx="422.6" cy="161.6" r="9.2" fill="url(#gr)"/>
<text x="422.6" y="164.1" text-anchor="middle" font-size="7.2" font-weight="700" fill="#000" stroke="#fff" stroke-width="2" stroke-opacity="0.9" stroke-linejoin="round" paint-order="stroke" font-family="Liberation Sans, sans-serif">155</text>
<circle cx="369" cy="133" r="9.2" fill="url(#gr)"/>
<text x="369" y="135.5" text-anchor="middle" font-size="7.2" font-weight="700" fill="#000" stroke="#fff" stroke-width="2" stroke-opacity="0.9" stroke-linejoin="round" paint-order="stroke" font-family="Liberation Sans, sans-serif">198</text></g>
</svg>
<!-- popup -->
<div class="abs" style="left:221.9px;top:28px;width:95.1px;height:79px;background:#fff;border-radius:6px;box-shadow:0 1px 5px rgba(0,0,0,0.35)"></div>
<div class="abs" style="left:247.6px;top:104px;width:6px;height:6px;background:#fff;transform:rotate(45deg);box-shadow:1px 1px 2px rgba(0,0,0,0.25)"></div>
<div class="abs" style="left:222.6px;top:98px;width:94.4px;height:9px;background:#fff;border-radius:0 0 6px 6px"></div>
<div class="abs" style="left:222.6px;top:36.6px;width:94.4px;text-align:center;font-size:8.2px;line-height:9.1px;color:#333;white-space:nowrap">Bishkek<br>2021-01-21 7:00 PM<br>(LT)</div>
<div class="abs" style="left:231px;top:64px;width:77.4px;height:33.6px;background:#fff;border:0.6px solid #00467f;box-sizing:border-box"></div>
<div class="abs" style="left:231px;top:64px;width:77.4px;height:16.6px;background:#00467f"></div>
<div class="abs" style="left:280.4px;top:80.6px;width:28px;height:17px;background:#99004c"></div>
<div class="abs" style="left:231px;top:67.5px;width:49.4px;text-align:center;font-size:8.2px;font-weight:700;color:#fff;line-height:10px">Pollutant</div>
<div class="abs" style="left:280.4px;top:67.5px;width:28px;text-align:center;font-size:8.2px;font-weight:700;color:#fff;line-height:10px">AQI</div>
<div class="abs" style="left:231px;top:84.3px;width:49.4px;text-align:center;font-size:8.2px;color:#333;line-height:10px">PM2.5</div>
<div class="abs" style="left:280.4px;top:84.3px;width:28px;text-align:center;font-size:8.2px;font-weight:700;color:#fff;line-height:10px">294</div>
</div>

<!-- right column -->
<div class="abs sh" style="left:441.6px;top:1.8px;width:193.6px">Select a City</div>
<div class="abs dd" style="left:441.6px;top:23.9px;width:196.6px;height:20.4px;padding-left:5.2px">Bishkek</div>
<div class="abs sh" style="left:441.6px;top:57.4px;width:193.6px">Select a Parameter</div>
<div class="abs dd" style="left:441.6px;top:79.8px;width:196.6px;height:20.4px;padding-left:5.2px">PM2.5</div>
<div class="abs" style="left:615.3px;top:27.3px;font-size:9.5px;color:#999;line-height:9px">×</div>
<div class="abs" style="left:626.8px;top:31.6px;width:0;height:0;border-left:2.3px solid transparent;border-right:2.3px solid transparent;border-top:2.6px solid #888"></div>
<div class="abs" style="left:615.3px;top:83.2px;font-size:9.5px;color:#999;line-height:9px">×</div>
<div class="abs" style="left:626.8px;top:87.5px;width:0;height:0;border-left:2.3px solid transparent;border-right:2.3px solid transparent;border-top:2.6px solid #888"></div>

<div class="abs" style="left:441.6px;top:112.3px;width:196.6px;height:43px;background:#fff;border:0.7px solid #c8c8c8;box-sizing:border-box"></div>
<div class="abs" style="left:447.6px;top:116.5px;font-size:8.4px;font-weight:700;color:#333;line-height:12px">Bishkek</div>
<svg class="abs" style="left:611.2px;top:128.1px" width="20.7" height="20.2" viewBox="0 0 20 20"><rect width="20" height="20" fill="#f3b63e"/>
<circle cx="5" cy="15.2" r="2" fill="#fff"/>
<path d="M3 9.2 A7.8 7.8 0 0 1 10.8 17" fill="none" stroke="#fff" stroke-width="2.6"/>
<path d="M3 3.8 A13.2 13.2 0 0 1 16.2 17" fill="none" stroke="#fff" stroke-width="2.6"/></svg>
<div class="abs" style="left:441px;top:161.5px;width:200px;font-size:6.44px;line-height:11.3px;color:#555;white-space:nowrap">Note: Values above 500 are considered Beyond the AQI. Follow<br>recommendations for the Hazardous category. Additional information<br>on reducing exposure to extremely high levels of particle pollution is<br>available <b style="color:#00305a;text-decoration:underline">here</b>.</div>

<!-- tabs -->
<div class="abs" style="left:9px;top:294.6px;width:630px;height:0.8px;background:#aaa"></div>
<div class="abs tab" style="left:9px;width:63.5px;background:#fff;border:0.7px solid #aaa;border-top:2.2px solid #00467f;border-bottom:none;color:#666;line-height:16px;height:18.2px;padding-top:2px">AQI</div>
<div class="abs tab" style="left:74.3px;width:98px">Concentration</div>
<div class="abs tab" style="left:174.3px;width:80.8px">Historical</div>
<div class="abs" style="left:9px;top:302.4px;font-size:8.22px;line-height:12px;color:#333;white-space:nowrap">Learn more about how the Air Quality Index [AQI] is calculated from the EPA <b style="color:#00305a;text-decoration:underline">here</b>.</div>

<!-- chart -->
<div class="abs" style="left:9px;top:324.5px;width:472px;height:176px;background:#fff"></div>
<svg id="chart" class="abs" style="left:0;top:0" width="645" height="500" viewBox="0 0 645 500" font-family="Liberation Sans, sans-serif">
<text x="244.9" y="339.2" text-anchor="middle" font-size="10.6" fill="#333" letter-spacing="0.42">Bishkek - PM2.5</text>
<text x="44.4" y="471.7" text-anchor="end" font-size="6.3" font-weight="700" fill="#444">0</text>
<rect x="53.4" y="447.48" width="421.8" height="0.6" fill="#e6e6e6"/>
<text x="44.4" y="450.0" text-anchor="end" font-size="6.3" font-weight="700" fill="#444">100</text>
<rect x="53.4" y="425.76" width="421.8" height="0.6" fill="#e6e6e6"/>
<text x="44.4" y="428.3" text-anchor="end" font-size="6.3" font-weight="700" fill="#444">200</text>
<rect x="53.4" y="404.04" width="421.8" height="0.6" fill="#e6e6e6"/>
<text x="44.4" y="406.5" text-anchor="end" font-size="6.3" font-weight="700" fill="#444">300</text>
<rect x="53.4" y="382.32" width="421.8" height="0.6" fill="#e6e6e6"/>
<text x="44.4" y="384.8" text-anchor="end" font-size="6.3" font-weight="700" fill="#444">400</text>
<rect x="53.4" y="360.60" width="421.8" height="0.6" fill="#e6e6e6"/>
<text x="44.4" y="363.1" text-anchor="end" font-size="6.3" font-weight="700" fill="#444">500</text>
<rect x="53.4" y="469.20" width="421.8" height="0.6" fill="#ccd6eb"/>
<rect x="53.10" y="469.5" width="0.6" height="5.8" fill="#ccd6eb"/>
<rect x="70.67" y="469.5" width="0.6" height="5.8" fill="#ccd6eb"/>
<rect x="88.25" y="469.5" width="0.6" height="5.8" fill="#ccd6eb"/>
<rect x="105.83" y="469.5" width="0.6" height="5.8" fill="#ccd6eb"/>
<rect x="123.40" y="469.5" width="0.6" height="5.8" fill="#ccd6eb"/>
<rect x="140.97" y="469.5" width="0.6" height="5.8" fill="#ccd6eb"/>
<rect x="158.55" y="469.5" width="0.6" height="5.8" fill="#ccd6eb"/>
<rect x="176.12" y="469.5" width="0.6" height="5.8" fill="#ccd6eb"/>
<rect x="193.70" y="469.5" width="0.6" height="5.8" fill="#ccd6eb"/>
<rect x="211.27" y="469.5" width="0.6" height="5.8" fill="#ccd6eb"/>
<rect x="228.85" y="469.5" width="0.6" height="5.8" fill="#ccd6eb"/>
<rect x="246.42" y="469.5" width="0.6" height="5.8" fill="#ccd6eb"/>
<rect x="264.00" y="469.5" width="0.6" height="5.8" fill="#ccd6eb"/>
<rect x="281.57" y="469.5" width="0.6" height="5.8" fill="#ccd6eb"/>
<rect x="299.15" y="469.5" width="0.6" height="5.8" fill="#ccd6eb"/>
<rect x="316.72" y="469.5" width="0.6" height="5.8" fill="#ccd6eb"/>
<rect x="334.30" y="469.5" width="0.6" height="5.8" fill="#ccd6eb"/>
<rect x="351.87" y="469.5" width="0.6" height="5.8" fill="#ccd6eb"/>
<rect x="369.45" y="469.5" width="0.6" height="5.8" fill="#ccd6eb"/>
<rect x="387.02" y="469.5" width="0.6" height="5.8" fill="#ccd6eb"/>
<rect x="404.60" y="469.5" width="0.6" height="5.8" fill="#ccd6eb"/>
<rect x="422.17" y="469.5" width="0.6" height="5.8" fill="#ccd6eb"/>
<rect x="439.75" y="469.5" width="0.6" height="5.8" fill="#ccd6eb"/>
<rect x="457.32" y="469.5" width="0.6" height="5.8" fill="#ccd6eb"/>
<rect x="474.90" y="469.5" width="0.6" height="5.8" fill="#ccd6eb"/>
<rect x="57.54" y="425.19" width="9.3" height="44.31" fill="#99004c" stroke="#5e002f" stroke-width="0.5"/>
<text transform="translate(63.7,479.0) rotate(-45)" text-anchor="end" font-size="6.2" fill="#555">8 PM</text>
<rect x="75.11" y="402.82" width="9.3" height="66.68" fill="#4c0026" stroke="#2a0015" stroke-width="0.5"/>
<text transform="translate(81.3,479.0) rotate(-45)" text-anchor="end" font-size="6.2" fill="#555">9 PM</text>
<rect x="92.69" y="420.85" width="9.3" height="48.65" fill="#99004c" stroke="#5e002f" stroke-width="0.5"/>
<text transform="translate(98.8,479.0) rotate(-45)" text-anchor="end" font-size="6.2" fill="#555">10 PM</text>
<rect x="110.26" y="427.80" width="9.3" height="41.70" fill="#ff0000" stroke="#a80000" stroke-width="0.5"/>
<text transform="translate(116.4,479.0) rotate(-45)" text-anchor="end" font-size="6.2" fill="#555">11 PM</text>
<rect x="127.84" y="432.58" width="9.3" height="36.92" fill="#ff0000" stroke="#a80000" stroke-width="0.5"/>
<text transform="translate(134.0,479.0) rotate(-45)" text-anchor="end" font-size="6.2" fill="#555">1/21/2021 12 AM</text>
<rect x="145.41" y="401.95" width="9.3" height="67.55" fill="#4c0026" stroke="#2a0015" stroke-width="0.5"/>
<text transform="translate(151.6,479.0) rotate(-45)" text-anchor="end" font-size="6.2" fill="#555">1 AM</text>
<rect x="162.99" y="427.80" width="9.3" height="41.70" fill="#ff0000" stroke="#a80000" stroke-width="0.5"/>
<text transform="translate(169.1,479.0) rotate(-45)" text-anchor="end" font-size="6.2" fill="#555">2 AM</text>
<rect x="180.56" y="427.15" width="9.3" height="42.35" fill="#ff0000" stroke="#a80000" stroke-width="0.5"/>
<text transform="translate(186.7,479.0) rotate(-45)" text-anchor="end" font-size="6.2" fill="#555">3 AM</text>
<rect x="198.14" y="410.42" width="9.3" height="59.08" fill="#99004c" stroke="#5e002f" stroke-width="0.5"/>
<text transform="translate(204.3,479.0) rotate(-45)" text-anchor="end" font-size="6.2" fill="#555">4 AM</text>
<rect x="215.71" y="410.42" width="9.3" height="59.08" fill="#99004c" stroke="#5e002f" stroke-width="0.5"/>
<text transform="translate(221.9,479.0) rotate(-45)" text-anchor="end" font-size="6.2" fill="#555">5 AM</text>
<rect x="233.29" y="429.32" width="9.3" height="40.18" fill="#ff0000" stroke="#a80000" stroke-width="0.5"/>
<text transform="translate(239.4,479.0) rotate(-45)" text-anchor="end" font-size="6.2" fill="#555">6 AM</text>
<rect x="250.86" y="435.83" width="9.3" height="33.67" fill="#ff0000" stroke="#a80000" stroke-width="0.5"/>
<text transform="translate(257.0,479.0) rotate(-45)" text-anchor="end" font-size="6.2" fill="#555">7 AM</text>
<rect x="268.44" y="444.30" width="9.3" height="25.20" fill="#ff7e00" stroke="#b85a00" stroke-width="0.5"/>
<text transform="translate(274.6,479.0) rotate(-45)" text-anchor="end" font-size="6.2" fill="#555">8 AM</text>
<rect x="286.01" y="452.34" width="9.3" height="17.16" fill="#ffff00" stroke="#b8b800" stroke-width="0.5"/>
<text transform="translate(292.2,479.0) rotate(-45)" text-anchor="end" font-size="6.2" fill="#555">9 AM</text>
<rect x="303.59" y="454.30" width="9.3" height="15.20" fill="#ffff00" stroke="#b8b800" stroke-width="0.5"/>
<text transform="translate(309.7,479.0) rotate(-45)" text-anchor="end" font-size="6.2" fill="#555">10 AM</text>
<rect x="321.16" y="451.47" width="9.3" height="18.03" fill="#ffff00" stroke="#b8b800" stroke-width="0.5"/>
<text transform="translate(327.3,479.0) rotate(-45)" text-anchor="end" font-size="6.2" fill="#555">11 AM</text>
<rect x="338.74" y="455.16" width="9.3" height="14.34" fill="#ffff00" stroke="#b8b800" stroke-width="0.5"/>
<text transform="translate(344.9,479.0) rotate(-45)" text-anchor="end" font-size="6.2" fill="#555">12 PM</text>
<rect x="356.31" y="458.42" width="9.3" height="11.08" fill="#ffff00" stroke="#b8b800" stroke-width="0.5"/>
<text transform="translate(362.5,479.0) rotate(-45)" text-anchor="end" font-size="6.2" fill="#555">1 PM</text>
<rect x="373.89" y="436.49" width="9.3" height="33.01" fill="#ff0000" stroke="#a80000" stroke-width="0.5"/>
<text transform="translate(380.0,479.0) rotate(-45)" text-anchor="end" font-size="6.2" fill="#555">2 PM</text>
<rect x="391.46" y="380.67" width="9.3" height="88.83" fill="#4c0026" stroke="#2a0015" stroke-width="0.5"/>
<text transform="translate(397.6,479.0) rotate(-45)" text-anchor="end" font-size="6.2" fill="#555">3 PM</text>
<rect x="409.04" y="380.67" width="9.3" height="88.83" fill="#4c0026" stroke="#2a0015" stroke-width="0.5"/>
<text transform="translate(415.2,479.0) rotate(-45)" text-anchor="end" font-size="6.2" fill="#555">4 PM</text>
<rect x="426.61" y="421.28" width="9.3" height="48.22" fill="#99004c" stroke="#5e002f" stroke-width="0.5"/>
<text transform="translate(432.8,479.0) rotate(-45)" text-anchor="end" font-size="6.2" fill="#555">5 PM</text>
<rect x="444.19" y="430.62" width="9.3" height="38.88" fill="#ff0000" stroke="#a80000" stroke-width="0.5"/>
<text transform="translate(450.3,479.0) rotate(-45)" text-anchor="end" font-size="6.2" fill="#555">6 PM</text>
<rect x="461.76" y="405.64" width="9.3" height="63.86" fill="#99004c" stroke="#5e002f" stroke-width="0.5"/>
<text transform="translate(467.9,479.0) rotate(-45)" text-anchor="end" font-size="6.2" fill="#555">7 PM</text>
<text transform="translate(26.3,415.5) rotate(-90)" text-anchor="middle" font-size="6.4" fill="#555">AQI</text>
</svg>

<!-- current conditions -->
<div class="abs" style="left:490.2px;top:325.2px;width:149px;height:172.6px;background:#eee;border:0.8px solid #00467f;box-sizing:border-box"></div>
<div class="abs" style="left:490.2px;top:325.2px;width:149px;height:44px;background:#00467f;color:#fff;text-align:center;font-weight:700;font-size:8.85px;white-space:nowrap">
<div class="abs" style="left:0;width:149px;top:4.2px;line-height:10px">Current Conditions</div>
<div class="abs" style="left:0;width:149px;top:17.8px;line-height:9px;font-size:7.1px">observed at</div>
<div class="abs" style="left:0;width:149px;top:30px;line-height:10px">Jan 21, 2021 7:00 PM (LT)</div></div>
<div class="abs" style="left:490.2px;top:369.2px;width:149px;height:68px;background:#99004c;color:#fff;text-align:center;font-weight:700;font-size:11.68px;line-height:16.6px;white-space:nowrap"><div style="padding-top:9.4px">294 AQI<br>Very Unhealthy<br>PM2.5</div></div>
<div class="abs" style="left:490.2px;top:441.5px;width:149px;text-align:center;font-size:7.05px;font-weight:700;color:#222;line-height:9px">Health Message</div>
<div class="abs" style="left:494px;top:455.4px;font-size:7.05px;line-height:12.45px;color:#555;white-space:nowrap">AQI values between 201 and 300 trigger a<br>health alert, meaning everyone may<br>experience more serious health effects.</div>
</body></html>
